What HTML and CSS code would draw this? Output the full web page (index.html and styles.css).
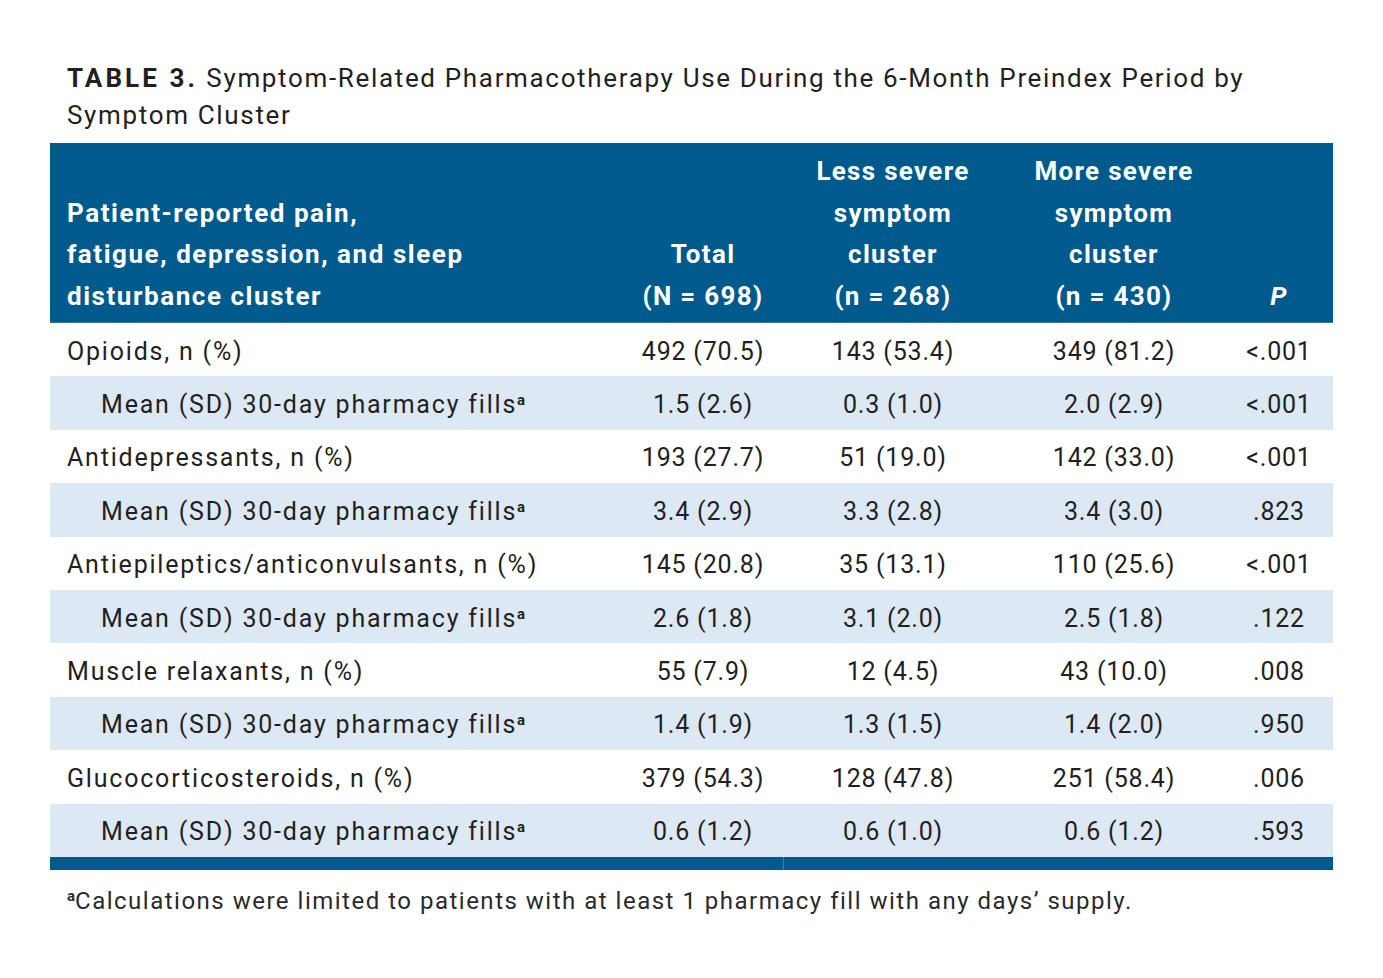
FILE: index.html
```html
<!DOCTYPE html>
<html lang="en">
<head>
<meta charset="utf-8">
<title>Table 3</title>
<link rel="stylesheet" href="styles.css">
</head>
<body>
<div class="page">
  <p class="caption"><span class="label">TABLE 3.</span> Symptom-Related Pharmacotherapy Use During the 6-Month Preindex Period by<br>Symptom Cluster</p>
  <table class="data">
    <colgroup>
      <col class="c1"><col class="c2"><col class="c3"><col class="c4"><col class="c5">
    </colgroup>
    <thead>
      <tr>
        <th class="first">Patient-reported pain,<br>fatigue, depression, and sleep<br>disturbance cluster</th>
        <th>Total<br>(N = 698)</th>
        <th>Less severe<br>symptom<br>cluster<br>(n = 268)</th>
        <th>More severe<br>symptom<br>cluster<br>(n = 430)</th>
        <th><i>P</i></th>
      </tr>
    </thead>
    <tbody>
      <tr><td class="first">Opioids, n (%)</td><td>492 (70.5)</td><td>143 (53.4)</td><td>349 (81.2)</td><td>&lt;.001</td></tr>
      <tr class="sub"><td class="first">Mean (SD) 30-day pharmacy fills<sup>a</sup></td><td>1.5 (2.6)</td><td>0.3 (1.0)</td><td>2.0 (2.9)</td><td>&lt;.001</td></tr>
      <tr><td class="first">Antidepressants, n (%)</td><td>193 (27.7)</td><td>51 (19.0)</td><td>142 (33.0)</td><td>&lt;.001</td></tr>
      <tr class="sub"><td class="first">Mean (SD) 30-day pharmacy fills<sup>a</sup></td><td>3.4 (2.9)</td><td>3.3 (2.8)</td><td>3.4 (3.0)</td><td>.823</td></tr>
      <tr><td class="first">Antiepileptics/anticonvulsants, n (%)</td><td>145 (20.8)</td><td>35 (13.1)</td><td>110 (25.6)</td><td>&lt;.001</td></tr>
      <tr class="sub"><td class="first">Mean (SD) 30-day pharmacy fills<sup>a</sup></td><td>2.6 (1.8)</td><td>3.1 (2.0)</td><td>2.5 (1.8)</td><td>.122</td></tr>
      <tr><td class="first">Muscle relaxants, n (%)</td><td>55 (7.9)</td><td>12 (4.5)</td><td>43 (10.0)</td><td>.008</td></tr>
      <tr class="sub"><td class="first">Mean (SD) 30-day pharmacy fills<sup>a</sup></td><td>1.4 (1.9)</td><td>1.3 (1.5)</td><td>1.4 (2.0)</td><td>.950</td></tr>
      <tr><td class="first">Glucocorticosteroids, n (%)</td><td>379 (54.3)</td><td>128 (47.8)</td><td>251 (58.4)</td><td>.006</td></tr>
      <tr class="sub"><td class="first">Mean (SD) 30-day pharmacy fills<sup>a</sup></td><td>0.6 (1.2)</td><td>0.6 (1.0)</td><td>0.6 (1.2)</td><td>.593</td></tr>
    </tbody>
    <tfoot>
      <tr class="bar"><td colspan="2"></td><td colspan="3" class="split"></td></tr>
    </tfoot>
  </table>
  <p class="footnote"><sup>a</sup>Calculations were limited to patients with at least 1 pharmacy fill with any days’ supply.</p>
</div>
</body>
</html>
```
FILE: styles.css
```css
html, body {
  margin: 0;
  padding: 0;
  background: #ffffff;
}
body {
  font-family: Roboto, "Liberation Sans", sans-serif;
  color: #231f20;
}
.page {
  padding: 60px 50px 0 50px;
  width: 1283px;
}
.caption {
  margin: 0 0 9px 0;
  padding: 0 17px;
  font-size: 26px;
  line-height: 37px;
  letter-spacing: 1.66px;
  white-space: nowrap;
}
.caption .label {
  font-weight: 700;
  letter-spacing: 3.1px;
}
.data {
  width: 1283px;
  border-collapse: collapse;
  table-layout: fixed;
}
.c1 { width: 573px; }
.c2 { width: 160px; }
.c3 { width: 220px; }
.c4 { width: 222px; }
.c5 { width: 108px; }
.data thead th {
  background: #005a8c;
  color: #ffffff;
  font-weight: 700;
  font-size: 26px;
  line-height: 41.5px;
  letter-spacing: 1.3px;
  text-align: center;
  vertical-align: bottom;
  padding: 8px 0 5px 0;
  border-bottom: 1px solid #2f75a3;
}
.data thead th.first {
  text-align: left;
  padding-left: 17px;
  letter-spacing: 1.55px;
}
.data tbody td {
  height: 49.4px;
  padding: 4px 0 0 0;
  font-size: 25px;
  line-height: 30px;
  letter-spacing: 0.8px;
  text-align: center;
  vertical-align: middle;
}
.data tbody td.first {
  text-align: left;
  padding-left: 17px;
  letter-spacing: 1.8px;
}
.data tbody tr.sub td {
  background: #dde8f5;
}
.data tbody tr.sub td.first {
  padding-left: 51px;
}
.data sup {
  font-size: 15px;
  line-height: 0;
  vertical-align: 8px;
  font-weight: 700;
  letter-spacing: 0;
}
.data tfoot .bar td {
  height: 13px;
  padding: 0;
  background: #005a8c;
}
.data tfoot .bar td.split {
  border-left: 1px solid #3d80ad;
}
.footnote {
  margin: 14px 0 0 0;
  padding: 0 17px;
  font-size: 24px;
  line-height: 34px;
  letter-spacing: 1.5px;
  color: #2a2a2a;
}
.footnote sup {
  font-size: 15px;
  line-height: 0;
  vertical-align: 8px;
  font-weight: 700;
  letter-spacing: 0;
}
```
